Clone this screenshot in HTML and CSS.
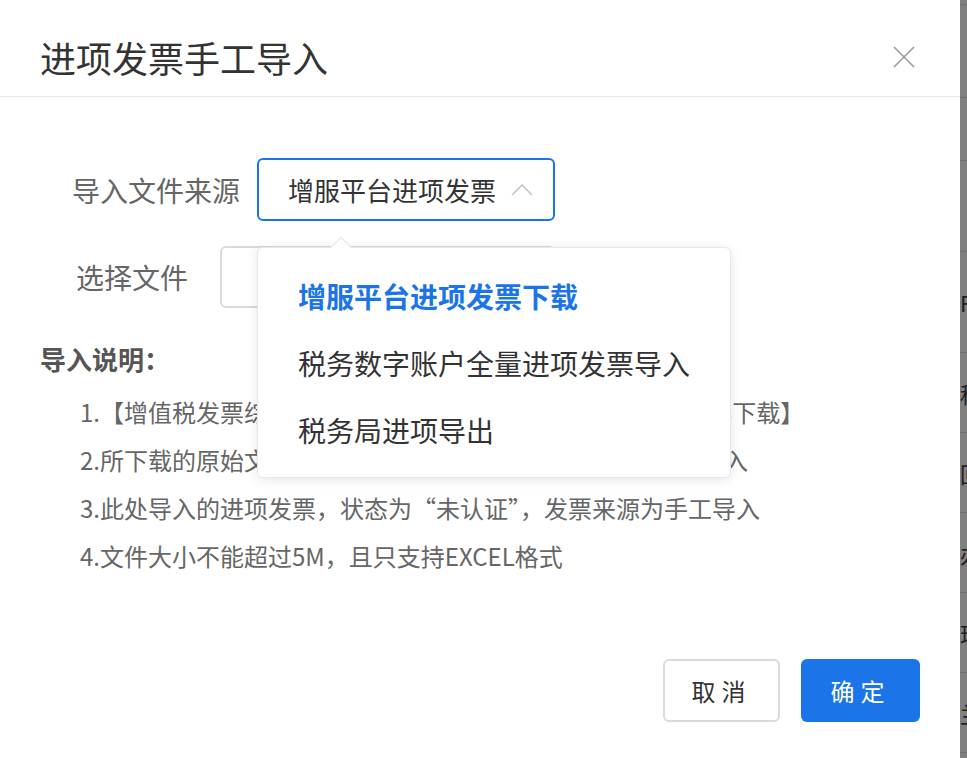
FILE: index.html
```html
<!DOCTYPE html>
<html lang="zh-CN">
  <head>
    <meta charset="UTF-8" />
    <meta name="viewport" content="width=device-width, initial-scale=1.0" />
    <title>进项发票手工导入</title>
    <link rel="stylesheet" href="styles.css">
  </head>
  <body>
    <div class="page">
      <div class="dialog">
        <div class="dialog-header">
          <h2 class="dialog-title">进项发票手工导入</h2>
          <button class="close-btn" aria-label="关闭">
            <svg width="22" height="22" viewBox="0 0 22 22">
              <line x1="1" y1="1" x2="21" y2="21" />
              <line x1="21" y1="1" x2="1" y2="21" />
            </svg>
          </button>
        </div>

        <div class="dialog-body">
          <div class="form-row row-source">
            <label class="form-label">导入文件来源</label>
            <div class="select is-open">
              <span class="select-value">增服平台进项发票</span>
              <svg class="select-arrow" width="22" height="12" viewBox="0 0 22 12">
                <polyline points="1,11 11,1 21,11" />
              </svg>
            </div>
          </div>

          <div class="form-row row-file">
            <label class="form-label">选择文件</label>
            <div class="file-input"></div>
          </div>

          <h3 class="notes-title">导入说明：</h3>
          <ol class="notes">
            <li>1.【增值税发票综合服务平台】→【抵扣类勾选】-【全量发票下载】</li>
            <li>2.所下载的原始文件无需做任何修改，可直接在此选择文件导入</li>
            <li>3.此处导入的进项发票，状态为“未认证”，发票来源为手工导入</li>
            <li>4.文件大小不能超过5M，且只支持EXCEL格式</li>
          </ol>
        </div>

        <div class="dialog-footer">
          <button class="btn btn-cancel">取消</button>
          <button class="btn btn-primary">确定</button>
        </div>

        <!-- dropdown of the source select -->
        <ul class="dropdown">
          <li class="dropdown-item active">增服平台进项发票下载</li>
          <li class="dropdown-item">税务数字账户全量进项发票导入</li>
          <li class="dropdown-item">税务局进项导出</li>
        </ul>
      </div>

      <!-- the page behind the modal mask -->
      <div class="mask-strip">
        <div class="strip-row" style="height: 5px"></div>
        <div class="strip-row" style="height: 93px"></div>
        <div class="strip-row" style="height: 63px"></div>
        <div class="strip-row" style="height: 91px"></div>
        <div class="strip-row" style="height: 101px">F</div>
        <div class="strip-row" style="height: 80px">税</div>
        <div class="strip-row" style="height: 80px">回</div>
        <div class="strip-row" style="height: 80px">办</div>
        <div class="strip-row" style="height: 80px">理</div>
        <div class="strip-row" style="height: 80px">兰</div>
      </div>
    </div>
  </body>
</html>
```

FILE: styles.css
```css
:root {
  --primary-color: #1b74e8;
  --text-color: #333;
  --label-color: #666;
  --border-color: #dadada;
  --radius: 6px;
}

* {
  box-sizing: border-box;
}

body {
  margin: 0;
  font-family: "Noto Sans CJK SC", "Noto Sans", sans-serif;
  color: var(--text-color);
  background-color: #fff;
  overflow: hidden;
}

.page {
  display: flex;
  width: 967px;
  height: 758px;
}

/* Dialog */
.dialog {
  position: relative;
  display: flex;
  flex-direction: column;
  width: 960px;
  height: 758px;
  background-color: #fff;
}

.dialog-header {
  display: flex;
  justify-content: space-between;
  align-items: center;
  padding: 35px 45px 17px 40px;
  border-bottom: 1px solid #e8e8e8;
}

.dialog-title {
  margin: 0;
  font-size: 36px;
  line-height: 44px;
  font-weight: normal;
  color: #333;
}

.close-btn {
  display: flex;
  padding: 0;
  border: none;
  background: none;
  cursor: pointer;
}

.close-btn svg line {
  stroke: #999;
  stroke-width: 1.6;
}

.dialog-body {
  padding-top: 61px;
}

.form-row {
  display: flex;
  align-items: center;
}

.form-label {
  font-size: 28px;
  line-height: 40px;
  color: var(--label-color);
}

.row-source {
  padding-left: 72px;
  gap: 17px;
}

.row-file {
  margin-top: 25px;
  padding-left: 76px;
  gap: 32px;
}

.select {
  display: flex;
  align-items: center;
  width: 298px;
  height: 63px;
  padding-left: 29px;
  border: 2px solid #dcdfe6;
  border-radius: var(--radius);
  cursor: pointer;
}

.select.is-open {
  border-color: var(--primary-color);
}

.select-value {
  font-size: 26px;
  color: var(--text-color);
}

.select-arrow {
  margin-left: 15px;
}

.select-arrow polyline {
  fill: none;
  stroke: #c0c4cc;
  stroke-width: 1.6;
}

.file-input {
  width: 335px;
  height: 62px;
  border: 2px solid var(--border-color);
  border-radius: var(--radius);
}

.notes-title {
  margin: 33px 0 0 40px;
  font-size: 26px;
  line-height: 36px;
  font-weight: bold;
  color: #555;
}

.notes {
  list-style: none;
  margin: 11px 0 0;
  padding-left: 80px;
}

.notes li {
  font-size: 24px;
  line-height: 48px;
  color: #666;
  white-space: nowrap;
}

/* Footer */
.dialog-footer {
  display: flex;
  justify-content: flex-end;
  gap: 21px;
  margin-top: auto;
  padding: 0 40px 36px;
}

.btn {
  height: 63px;
  font-family: inherit;
  font-size: 24px;
  letter-spacing: 6px;
  padding-left: 6px;
  border-radius: var(--radius);
  cursor: pointer;
}

.btn-cancel {
  width: 117px;
  background-color: #fff;
  border: 2px solid var(--border-color);
  color: var(--text-color);
}

.btn-primary {
  width: 119px;
  background-color: var(--primary-color);
  border: none;
  color: #fff;
}

/* Dropdown */
.dropdown {
  position: absolute;
  top: 247px;
  left: 257px;
  width: 474px;
  margin: 0;
  padding: 15px 0 13px;
  list-style: none;
  background-color: #fff;
  border: 1px solid #e4e7ed;
  border-radius: var(--radius);
  box-shadow: 0 2px 12px rgba(0, 0, 0, 0.1);
}

.dropdown::before {
  content: "";
  position: absolute;
  top: -8px;
  left: 75px;
  width: 15px;
  height: 15px;
  background-color: #fff;
  border-top: 1px solid #e4e7ed;
  border-left: 1px solid #e4e7ed;
  transform: rotate(45deg);
}

.dropdown-item {
  height: 67px;
  line-height: 67px;
  padding-left: 40px;
  font-size: 28px;
  color: var(--text-color);
}

.dropdown-item.active {
  color: var(--primary-color);
  font-weight: bold;
}

/* Page behind the mask */
.mask-strip {
  flex: 1;
  overflow: hidden;
  background-color: #808080;
}

.strip-row {
  display: flex;
  align-items: center;
  border-bottom: 1px solid #707070;
  font-size: 22px;
  color: #1e1e1e;
  white-space: nowrap;
}
```
